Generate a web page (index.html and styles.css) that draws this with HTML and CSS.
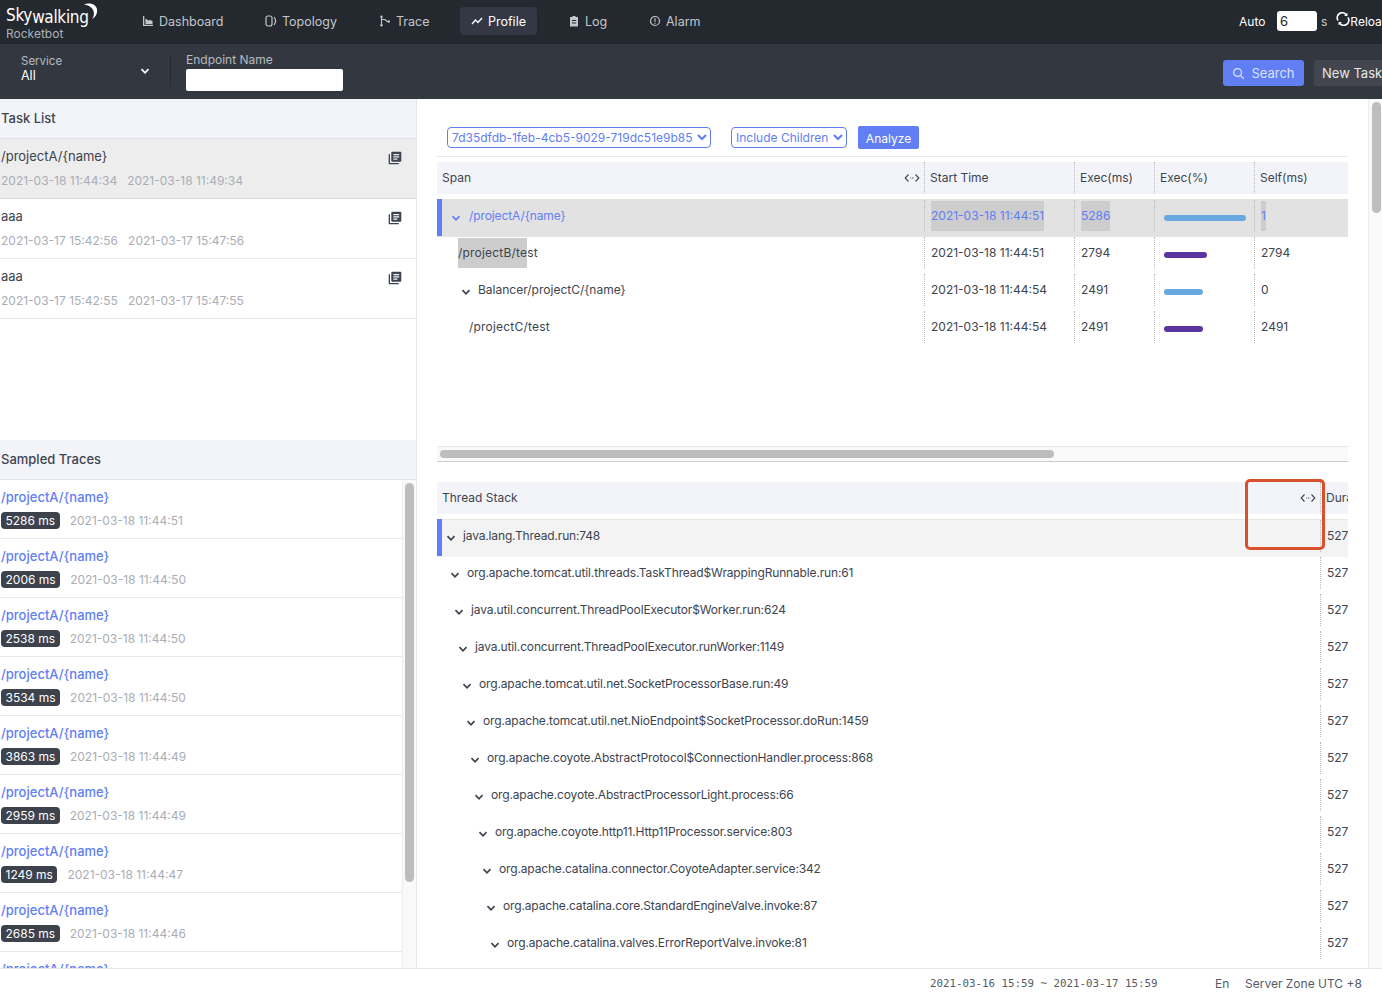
FILE: index.html
```html
<!DOCTYPE html>
<html lang="en">
<head>
<meta charset="utf-8">
<title>Rocketbot Profile</title>
<link rel="stylesheet" href="styles.css">
</head>
<body>
<svg class="defs" aria-hidden="true">
  <symbol id="chev" viewBox="0 0 10 10"><path d="M1.500 3.200 5 6.800l3.500-3.600" fill="none" stroke="currentColor" stroke-width="1.700"/></symbol>
  <symbol id="drag" viewBox="0 0 16 10"><path d="M4.500 1.500 1.200 5l3.300 3.500M11.500 1.500 14.800 5l-3.300 3.500" fill="none" stroke="currentColor" stroke-width="1.100"/><path d="M6.300 5h.9M8 5h.9M9.600 5h.6" stroke="currentColor" stroke-width="1"/></symbol>
  <symbol id="task" viewBox="0 0 14 14"><path d="M0.700 3.200v9.200a.9.900 0 0 0 .9.900h9.200v-1.200H2V3.200z" fill="currentColor"/><path d="M4.200.7h8.200a.9.900 0 0 1 .9.900v8.200a.9.900 0 0 1-.9.900H4.200a.9.900 0 0 1-.9-.9V1.600a.9.900 0 0 1 .9-.9zm1.200 2.300v1.200h5.800V3zm0 2.300v1.200h5.800V5.300zm0 2.200v1.200h4V7.500z" fill="currentColor" fill-rule="evenodd"/></symbol>
</svg>

<header class="topbar">
  <div class="logo">
    <div class="logo-main"><span>Sky</span><span class="logo-drop">walking</span><svg class="logo-arc" viewBox="0 0 15 17"><path d="M1 1.500C4 .2 9 .2 11.800 2.500c3 2.500 3 7 1 10-.8 1.300-2 2.500-3.800 3.500 1.800-2.500 2.300-5 1.700-7.500C10 5.500 7 2.500 1 1.500z" fill="#fff"/></svg></div>
    <div class="logo-sub">Rocketbot</div>
  </div>
  <nav class="nav">
    <a class="nav-item w-dash"><svg class="nav-ico" viewBox="0 0 12 12"><path d="M1 1h1.300v8.700H11V11H1z M3.500 5.500V3.500l1.500 1 1.500 1 1.500-.5 2.500 1v3H3.500z" fill="currentColor"/></svg>Dashboard</a>
    <a class="nav-item w-topo"><svg class="nav-ico" viewBox="0 0 12 12"><rect x="1" y="1" width="6" height="10" rx="2" fill="none" stroke="currentColor" stroke-width="1.200"/><path d="M9 2c2 2.500 2 5.500 0 8" fill="none" stroke="currentColor" stroke-width="1.200"/></svg>Topology</a>
    <a class="nav-item w-trace"><svg class="nav-ico" viewBox="0 0 12 12"><path d="M2.500 1v10M2.500 4.500 H6 L8 6.500H10.500" fill="none" stroke="currentColor" stroke-width="1.100"/><circle cx="2.500" cy="1.800" r="1.200" fill="currentColor"/><circle cx="2.500" cy="10.200" r="1.200" fill="currentColor"/><circle cx="9.800" cy="6.500" r="1.200" fill="currentColor"/></svg>Trace</a>
    <a class="nav-item w-prof active"><svg class="nav-ico" viewBox="0 0 12 12"><path d="M1 9 4.500 5 7 7.500 11 3" fill="none" stroke="currentColor" stroke-width="1.300"/></svg>Profile</a>
    <a class="nav-item w-log"><svg class="nav-ico" viewBox="0 0 12 12"><path d="M2 2h2.500V1h3v1H10v9.500H2zm1.800 3v1h4.400V5zm0 2.500v1h4.400v-1z" fill="currentColor" fill-rule="evenodd"/></svg>Log</a>
    <a class="nav-item w-alarm"><svg class="nav-ico" viewBox="0 0 12 12"><circle cx="6" cy="6" r="4.500" fill="none" stroke="currentColor" stroke-width="1.200"/><path d="M6 3.300v3.400M6 7.800v1" stroke="currentColor" stroke-width="1.200"/></svg>Alarm</a>
  </nav>
  <div class="auto">
    <span class="auto-label">Auto</span>
    <input class="auto-input" type="text" value="6">
    <span class="auto-unit">s</span>
    <svg class="reload-ico" viewBox="0 0 14 14"><path d="M2 8.500A5 5 0 0 1 10.500 3M12 5.500A5 5 0 0 1 3.500 11" fill="none" stroke="#fff" stroke-width="1.600"/><path d="M8 3.600l3.400.6.200-3.400zM6 10.400l-3.400-.6-.2 3.400z" fill="#fff"/></svg>
    <span class="reload-text">Reload</span>
  </div>
</header>

<section class="toolbar">
  <div class="service">
    <div class="service-text">
      <div class="tool-label service-label">Service</div>
      <div class="service-value">All</div>
    </div>
    <svg class="service-chev"><use href="#chev"/></svg>
  </div>
  <div class="endpoint">
    <label class="tool-label">Endpoint Name</label>
    <input class="endpoint-input" type="text">
  </div>
  <div class="tool-actions">
    <button class="btn-search"><svg class="search-ico" viewBox="0 0 14 14"><circle cx="6" cy="6" r="4.200" fill="none" stroke="currentColor" stroke-width="1.400"/><path d="m9.200 9.200 3.600 3.600" stroke="currentColor" stroke-width="1.400"/></svg>Search</button>
    <button class="btn-new">New Task</button>
  </div>
</section>

<div class="workspace">
  <aside class="side">
    <h2 class="side-head">Task List</h2>
    <div class="task-list">
      <div class="task selected">
        <div class="task-line"><span>/projectA/{name}</span><svg class="task-ico"><use href="#task"/></svg></div>
        <div class="task-dates"><span>2021-03-18 11:44:34</span><span>2021-03-18 11:49:34</span></div>
      </div>
      <div class="task">
        <div class="task-line"><span>aaa</span><svg class="task-ico"><use href="#task"/></svg></div>
        <div class="task-dates"><span>2021-03-17 15:42:56</span><span>2021-03-17 15:47:56</span></div>
      </div>
      <div class="task">
        <div class="task-line"><span>aaa</span><svg class="task-ico"><use href="#task"/></svg></div>
        <div class="task-dates"><span>2021-03-17 15:42:55</span><span>2021-03-17 15:47:55</span></div>
      </div>
    </div>
    <h2 class="side-head head-traces">Sampled Traces</h2>
    <div class="trace-wrap">
      <div class="trace-list">
        <div class="trace"><a class="trace-name">/projectA/{name}</a><div class="trace-meta"><span class="badge">5286 ms</span><span class="trace-date">2021-03-18 11:44:51</span></div></div>
        <div class="trace"><a class="trace-name">/projectA/{name}</a><div class="trace-meta"><span class="badge">2006 ms</span><span class="trace-date">2021-03-18 11:44:50</span></div></div>
        <div class="trace"><a class="trace-name">/projectA/{name}</a><div class="trace-meta"><span class="badge">2538 ms</span><span class="trace-date">2021-03-18 11:44:50</span></div></div>
        <div class="trace"><a class="trace-name">/projectA/{name}</a><div class="trace-meta"><span class="badge">3534 ms</span><span class="trace-date">2021-03-18 11:44:50</span></div></div>
        <div class="trace"><a class="trace-name">/projectA/{name}</a><div class="trace-meta"><span class="badge">3863 ms</span><span class="trace-date">2021-03-18 11:44:49</span></div></div>
        <div class="trace"><a class="trace-name">/projectA/{name}</a><div class="trace-meta"><span class="badge">2959 ms</span><span class="trace-date">2021-03-18 11:44:49</span></div></div>
        <div class="trace"><a class="trace-name">/projectA/{name}</a><div class="trace-meta"><span class="badge">1249 ms</span><span class="trace-date">2021-03-18 11:44:47</span></div></div>
        <div class="trace"><a class="trace-name">/projectA/{name}</a><div class="trace-meta"><span class="badge">2685 ms</span><span class="trace-date">2021-03-18 11:44:46</span></div></div>
        <div class="trace"><a class="trace-name">/projectA/{name}</a></div>
      </div>
      <div class="vscroll"><div class="vthumb side-thumb"></div></div>
    </div>
  </aside>

  <main class="main">
    <div class="main-inner">
      <div class="controls">
        <select class="ctl ctl-id"><option>7d35dfdb-1feb-4cb5-9029-719dc51e9b85</option></select>
        <select class="ctl ctl-mode"><option>Include Children</option></select>
        <button class="btn-analyze">Analyze</button>
      </div>

      <div class="span-table">
        <div class="row head span-cols">
          <div class="cell first">Span<svg class="drag"><use href="#drag"/></svg></div>
          <div class="cell">Start Time</div><div class="cell">Exec(ms)</div><div class="cell">Exec(%)</div><div class="cell">Self(ms)</div>
        </div>
        <div class="span-body">
          <div class="row span-cols current">
            <div class="cell first" style="padding-left:9px"><svg class="chev"><use href="#chev"/></svg><span class="tight">/projectA/{name}</span></div>
            <div class="cell val"><span class="hl">2021-03-18 11:44:51</span></div><div class="cell val"><span class="hl">5286</span></div>
            <div class="cell val"><span class="bar blue" style="width:82px"></span></div><div class="cell val"><span class="hl">1</span></div>
          </div>
          <div class="row span-cols">
            <div class="cell first" style="padding-left:21px"><span class="wide"><span class="hl">/projectB/te</span>st</span></div>
            <div class="cell val">2021-03-18 11:44:51</div><div class="cell val">2794</div>
            <div class="cell val"><span class="bar purple" style="width:43px"></span></div><div class="cell val">2794</div>
          </div>
          <div class="row span-cols">
            <div class="cell first" style="padding-left:24px"><svg class="chev"><use href="#chev"/></svg><span>Balancer/projectC/{name}</span></div>
            <div class="cell val">2021-03-18 11:44:54</div><div class="cell val">2491</div>
            <div class="cell val"><span class="bar blue" style="width:39px"></span></div><div class="cell val">0</div>
          </div>
          <div class="row span-cols">
            <div class="cell first" style="padding-left:32px"><span class="wide">/projectC/test</span></div>
            <div class="cell val">2021-03-18 11:44:54</div><div class="cell val">2491</div>
            <div class="cell val"><span class="bar purple" style="width:39px"></span></div><div class="cell val">2491</div>
          </div>
        </div>
        <div class="hscroll"><div class="hthumb"></div></div>
      </div>

      <div class="stack-table">
        <div class="row head stack-cols">
          <div class="cell first">Thread Stack<svg class="drag"><use href="#drag"/></svg></div>
          <div class="cell">Duration</div>
        </div>
        <div class="row stack-cols stack-current">
          <div class="cell first" style="padding-left:4px"><svg class="chev"><use href="#chev"/></svg><span class="frame">java.lang.Thread.run:748</span></div><div class="cell val">527</div>
        </div>
        <div class="row stack-cols"><div class="cell first" style="padding-left:13px"><svg class="chev"><use href="#chev"/></svg><span class="frame">org.apache.tomcat.util.threads.TaskThread$WrappingRunnable.run:61</span></div><div class="cell val">527</div></div>
        <div class="row stack-cols"><div class="cell first" style="padding-left:17px"><svg class="chev"><use href="#chev"/></svg><span class="frame">java.util.concurrent.ThreadPoolExecutor$Worker.run:624</span></div><div class="cell val">527</div></div>
        <div class="row stack-cols"><div class="cell first" style="padding-left:21px"><svg class="chev"><use href="#chev"/></svg><span class="frame">java.util.concurrent.ThreadPoolExecutor.runWorker:1149</span></div><div class="cell val">527</div></div>
        <div class="row stack-cols"><div class="cell first" style="padding-left:25px"><svg class="chev"><use href="#chev"/></svg><span class="frame">org.apache.tomcat.util.net.SocketProcessorBase.run:49</span></div><div class="cell val">527</div></div>
        <div class="row stack-cols"><div class="cell first" style="padding-left:29px"><svg class="chev"><use href="#chev"/></svg><span class="frame">org.apache.tomcat.util.net.NioEndpoint$SocketProcessor.doRun:1459</span></div><div class="cell val">527</div></div>
        <div class="row stack-cols"><div class="cell first" style="padding-left:33px"><svg class="chev"><use href="#chev"/></svg><span class="frame">org.apache.coyote.AbstractProtocol$ConnectionHandler.process:868</span></div><div class="cell val">527</div></div>
        <div class="row stack-cols"><div class="cell first" style="padding-left:37px"><svg class="chev"><use href="#chev"/></svg><span class="frame">org.apache.coyote.AbstractProcessorLight.process:66</span></div><div class="cell val">527</div></div>
        <div class="row stack-cols"><div class="cell first" style="padding-left:41px"><svg class="chev"><use href="#chev"/></svg><span class="frame">org.apache.coyote.http11.Http11Processor.service:803</span></div><div class="cell val">527</div></div>
        <div class="row stack-cols"><div class="cell first" style="padding-left:45px"><svg class="chev"><use href="#chev"/></svg><span class="frame">org.apache.catalina.connector.CoyoteAdapter.service:342</span></div><div class="cell val">527</div></div>
        <div class="row stack-cols"><div class="cell first" style="padding-left:49px"><svg class="chev"><use href="#chev"/></svg><span class="frame">org.apache.catalina.core.StandardEngineValve.invoke:87</span></div><div class="cell val">527</div></div>
        <div class="row stack-cols"><div class="cell first" style="padding-left:53px"><svg class="chev"><use href="#chev"/></svg><span class="frame">org.apache.catalina.valves.ErrorReportValve.invoke:81</span></div><div class="cell val">527</div></div>
      </div>
      <div class="callout"></div>
    </div>
    <div class="vscroll main-scroll"><div class="vthumb main-thumb"></div></div>
  </main>
</div>

<footer class="footer">
  <span class="foot-range">2021-03-16 15:59 ~ 2021-03-17 15:59</span>
  <span class="foot-lang">En</span>
  <span class="foot-zone">Server Zone UTC +8</span>
</footer>
</body>
</html>
```

FILE: styles.css
```css
* { box-sizing: border-box; }
html, body { height: 100%; }
body {
  margin: 0;
  height: 100vh;
  overflow: hidden;
  display: flex;
  flex-direction: column;
  font-family: Inter, "Noto Sans", "Liberation Sans", sans-serif;
  font-size: 12px;
  color: #3d444f;
  background: #fff;
}
.defs { display: none; }

/* top navigation */
.topbar {
  flex: 0 0 44px;
  display: flex;
  align-items: center;
  background: #24282f;
  color: #fff;
  overflow: hidden;
}
.logo { width: 131px; padding-left: 6px; flex-shrink: 0; margin-top: 2px; }
.logo-main {
  display: flex;
  height: 19px;
  font-family: "DejaVu Sans Condensed", "DejaVu Sans", sans-serif;
  font-size: 17px;
  line-height: 19px;
  letter-spacing: -0.3px;
  color: #fff;
}
.logo-drop { margin-top: 2px; }
.logo-arc { width: 15px; height: 17px; margin-left: -6px; margin-top: -3px; flex-shrink: 0; }
.logo-sub { font-size: 12px; line-height: 13px; color: #aab0b9; margin-top: 2px; }
.nav { display: flex; gap: 20px; margin-bottom: 2px; }
.nav-item {
  display: flex;
  align-items: center;
  height: 28px;
  padding: 0 10px 0 11px;
  border-radius: 4px;
  color: #c3c7cd;
  font-size: 12.5px;
}
.nav-item.active { background: #333844; color: #fff; }
.nav-ico { width: 12px; height: 12px; margin-right: 5px; flex-shrink: 0; }
.w-dash { width: 103px; }
.w-topo { width: 94px; }
.w-trace { width: 72px; }
.w-prof { width: 77px; }
.w-log { width: 61px; }
.w-alarm { width: 70px; }
.auto {
  margin-left: auto;
  margin-right: -14px;
  margin-bottom: 2px;
  width: 157px;
  flex-shrink: 0;
  display: flex;
  align-items: center;
  color: #fff;
  font-size: 12px;
}
.auto-label { width: 38px; }
.auto-input {
  width: 40px;
  height: 20px;
  border: 0;
  border-radius: 3px;
  padding: 0 3px;
  font: inherit;
  font-size: 13px;
  color: #222;
  background: #fff;
}
.auto-unit { margin: 0 9px 0 4px; color: #ccc; }
.reload-ico { width: 14px; height: 14px; margin-top: -4px; }
.reload-text { white-space: nowrap; }

/* filter bar */
.toolbar {
  flex: 0 0 55px;
  display: flex;
  background: #333840;
  color: #fff;
  overflow: hidden;
}
.service {
  width: 171px;
  height: 32px;
  margin-top: 10px;
  padding: 0 20px 0 21px;
  display: flex;
  align-items: center;
  justify-content: space-between;
  border-right: 1px solid #272b31;
  flex-shrink: 0;
}
.service-text { padding-bottom: 2px; }
.tool-label { display: block; font-size: 12px; line-height: 14px; color: #b5b9c0; }
.service-label { font-size: 11.5px; }
.service-value { font-size: 12.5px; line-height: 16px; color: #fff; }
.service-chev { width: 10px; height: 10px; color: #fff; margin-top: 2px; }
.endpoint { margin: 9px 0 0 15px; }
.endpoint-input {
  display: block;
  width: 157px;
  height: 22px;
  margin-top: 2px;
  border: 0;
  border-radius: 2px;
  background: #fff;
}
.tool-actions {
  margin-left: auto;
  margin-right: -16px;
  display: flex;
  gap: 10px;
  padding-top: 16px;
  flex-shrink: 0;
}
.btn-search, .btn-new {
  height: 26px;
  border: 0;
  border-radius: 3px;
  font: inherit;
  font-size: 13px;
}
.btn-search {
  width: 81px;
  display: flex;
  align-items: center;
  justify-content: center;
  background: #617ef5;
  color: #d9e1fd;
}
.search-ico { width: 13px; height: 13px; margin-right: 6px; }
.btn-new { width: 84px; background: #43464f; color: #e6e8ea; text-align: left; padding-left: 8px; }

/* workspace */
.workspace {
  flex: 0 0 870px;
  display: flex;
  overflow: hidden;
  border-bottom: 1px solid #e6e6e6;
}
.side {
  width: 417px;
  flex-shrink: 0;
  display: flex;
  flex-direction: column;
  border-right: 1px solid #e6e6e6;
}
.side-head {
  flex: 0 0 40px;
  margin: 0;
  padding-left: 1px;
  font-size: 13px;
  font-weight: 500;
  line-height: 39px;
  color: #3d444f;
  background: #f3f4f9;
  border-bottom: 1px solid #e4e4e8;
}
.head-traces { line-height: 38px; }
.task-list { flex: 0 0 301px; }
.task { height: 60px; padding-left: 1px; border-bottom: 1px solid #e8e8e8; }
.task.selected { background: #ededed; border-bottom-color: #d9d9d9; }
.task-line {
  display: flex;
  justify-content: space-between;
  align-items: flex-start;
  padding: 9px 14px 0 0;
  height: 34px;
  line-height: 17px;
  font-size: 13px;
}
.task-ico { width: 14px; height: 14px; margin-top: 3px; color: #3d444f; }
.task-dates { display: flex; gap: 10px; font-size: 12px; line-height: 16px; color: #a9adb5; }
.trace-wrap { flex: 1; display: flex; min-height: 0; }
.trace-list { flex: 1; overflow: hidden; min-width: 0; }
.trace { height: 59px; padding: 9px 0 0 1px; border-bottom: 1px solid #e8e8e8; }
.trace-name { display: block; line-height: 17px; color: #617ef5; font-size: 13px; font-weight: 500; }
.trace-meta { display: flex; align-items: center; margin-top: 6px; }
.badge {
  height: 17px;
  padding: 0 4.5px;
  border-radius: 4px;
  background: #3d424d;
  color: #fff;
  font-size: 12px;
  line-height: 17px;
  margin-right: 10px;
}
.trace-date { font-size: 12px; color: #a9adb5; }
.vscroll {
  width: 14px;
  flex-shrink: 0;
  background: #f9f9f9;
  border-left: 1px solid #eee;
}
.vthumb { width: 9px; margin-left: 2px; border-radius: 5px; background: #bdbdbd; }
.side-thumb { height: 399px; margin-top: 3px; }
.main-thumb { height: 111px; margin-top: 3px; margin-left: 3px; }

/* main */
.main { flex: 1; display: flex; min-width: 0; }
.main-inner { flex: 1; min-width: 0; padding: 27px 20px 0; position: relative; overflow: hidden; }
.controls {
  display: flex;
  align-items: center;
  height: 31px;
  padding-left: 10px;
  border-bottom: 1px solid #e8e8e8;
  padding-bottom: 7px;
}
.ctl {
  height: 21px;
  border: 1px solid #617ef5;
  border-radius: 4px;
  background: #fff;
  color: #617ef5;
  font: inherit;
  font-size: 12px;
}
.ctl-id { width: 264px; }
.ctl-mode { width: 116px; margin-left: 20px; }
.btn-analyze {
  width: 61px;
  height: 23px;
  margin-left: 11px;
  padding-top: 2px;
  border: 0;
  border-radius: 2px;
  background: #617ef5;
  color: #fff;
  font: inherit;
  font-size: 12px;
}
.span-table { margin-top: 5px; }
.row { display: grid; height: 37px; }
.span-cols { grid-template-columns: 487px 150px 80px 100px 94px; }
.stack-cols { grid-template-columns: 883px 28px; }
.row.head { height: 32px; background: #f3f4f9; margin-bottom: 5px; }
.cell {
  display: flex;
  align-items: center;
  height: 32px;
  margin-top: 1px;
  padding-left: 5px;
  border-left: 1px dotted #bbb;
  white-space: nowrap;
  overflow: hidden;
  line-height: 30px;
}
.cell.first { border-left: 0; }
.head .cell { height: 32px; margin-top: 0; color: #3d444f; }
.head .first { justify-content: space-between; padding-right: 4px; }
.val { padding-left: 6px; }
.frame { letter-spacing: -0.15px; }
.tight { letter-spacing: -0.1px; }
.wide { letter-spacing: 0.2px; }
.drag { width: 16px; height: 10px; color: #3d444f; flex-shrink: 0; }
.chev { width: 10px; height: 10px; margin: 4px 7px 0 0; color: #3d444f; flex-shrink: 0; }
.hl { display: inline-block; height: 30px; background: #cdcdcd; }
.span-body { height: 247px; overflow: hidden; }
.current { background: #e2e2e2; color: #617ef5; box-shadow: inset 5px 0 0 #617ef5, 0 1px 0 #e2e2e2; }
.current .chev { color: #617ef5; margin-left: 5px; margin-right: 8px; }
.bar { display: block; height: 6px; margin: 3px 0 0 3px; border-radius: 3px; }
.blue { background: #69a8e0; }
.purple { background: #5c35a0; }
.hscroll {
  height: 16px;
  padding: 3px 3px;
  background: #fafafa;
  border-top: 1px solid #e8e8e8;
  border-bottom: 1px solid #ccc;
}
.hthumb { width: 614px; height: 8px; border-radius: 4px; background: #bdbdbd; }
.stack-table { margin-top: 20px; }
.stack-current { background: #f3f3f3; box-shadow: inset 5px 0 0 #617ef5, inset 0 1px 0 #e6e6e6, 0 1px 0 #f3f3f3; }
.stack-current .chev { margin-left: 5px; }
.callout {
  position: absolute;
  left: 828px;
  top: 380px;
  width: 80px;
  height: 71px;
  border: 3px solid #d9512c;
  border-radius: 5px;
}
.main-scroll { height: 100%; }

/* footer */
.footer {
  flex: 1;
  display: flex;
  align-items: center;
  padding: 0 21px 0 930px;
  font-size: 12px;
  color: #555b66;
  white-space: nowrap;
}
.foot-range { flex: 0 0 285px; font-family: "DejaVu Sans Mono", monospace; font-size: 10.8px; }
.foot-lang { flex: 0 0 30px; }
```
